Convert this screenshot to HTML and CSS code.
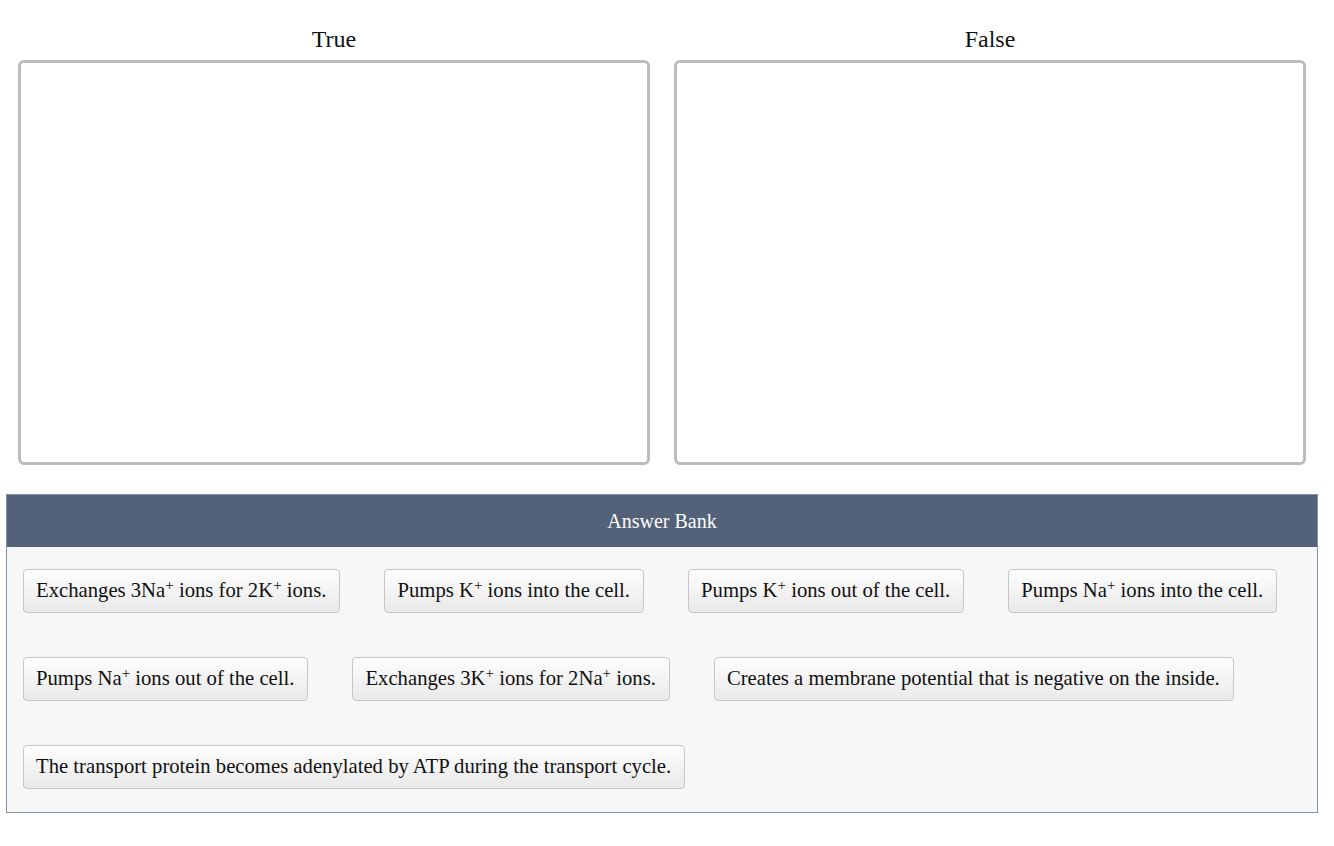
FILE: index.html
```html
<!DOCTYPE html>
<html>
<head>
<meta charset="utf-8">
<link rel="stylesheet" href="styles.css">
</head>
<body>
<div class="page">
  <div class="bins">
    <div class="bin">
      <div class="bin-label">True</div>
      <div class="bin-box"></div>
    </div>
    <div class="bin">
      <div class="bin-label">False</div>
      <div class="bin-box"></div>
    </div>
  </div>
  <div class="bank">
    <div class="bank-header">Answer Bank</div>
    <div class="bank-body">
      <div class="chip">Exchanges 3Na<sup>+</sup> ions for 2K<sup>+</sup> ions.</div>
      <div class="chip">Pumps K<sup>+</sup> ions into the cell.</div>
      <div class="chip">Pumps K<sup>+</sup> ions out of the cell.</div>
      <div class="chip">Pumps Na<sup>+</sup> ions into the cell.</div>
      <div class="chip">Pumps Na<sup>+</sup> ions out of the cell.</div>
      <div class="chip">Exchanges 3K<sup>+</sup> ions for 2Na<sup>+</sup> ions.</div>
      <div class="chip">Creates a membrane potential that is negative on the inside.</div>
      <div class="chip">The transport protein becomes adenylated by ATP during the transport cycle.</div>
    </div>
  </div>
</div>
</body>
</html>
```
FILE: styles.css
```css
* { box-sizing: border-box; }
html, body {
  margin: 0;
  padding: 0;
  background: #ffffff;
  font-family: "Liberation Serif", "Times New Roman", serif;
  color: #111;
}
.page {
  width: 1334px;
  padding-top: 21px;
}
.bins {
  display: flex;
  gap: 24px;
  padding-left: 18px;
}
.bin {
  width: 632px;
}
.bin-label {
  font-size: 24px;
  line-height: 36px;
  text-align: center;
  margin-bottom: 3px;
}
.bin-box {
  height: 405px;
  border: 3px solid #bcbcbc;
  border-radius: 6px;
  background: #fff;
}
.bank {
  margin: 29px 0 0 6px;
  width: 1312px;
  border: 1px solid #8793a6;
  background: #f7f7f7;
}
.bank-header {
  height: 52px;
  background: #536279;
  color: #fff;
  font-size: 20px;
  line-height: 52px;
  text-align: center;
}
.bank-body {
  display: flex;
  flex-wrap: wrap;
  column-gap: 44px;
  row-gap: 44px;
  padding: 22px 16px 23px 16px;
}
.chip {
  font-size: 20.7px;
  line-height: 24px;
  padding: 8px 13px 10px 12px;
  border: 1px solid #c6c6c6;
  border-radius: 4px;
  background: linear-gradient(#fefefe, #e9e9e9);
  color: #111;
  white-space: nowrap;
}
.chip sup {
  font-size: 15px;
  line-height: 0;
  vertical-align: 7px;
}
```
